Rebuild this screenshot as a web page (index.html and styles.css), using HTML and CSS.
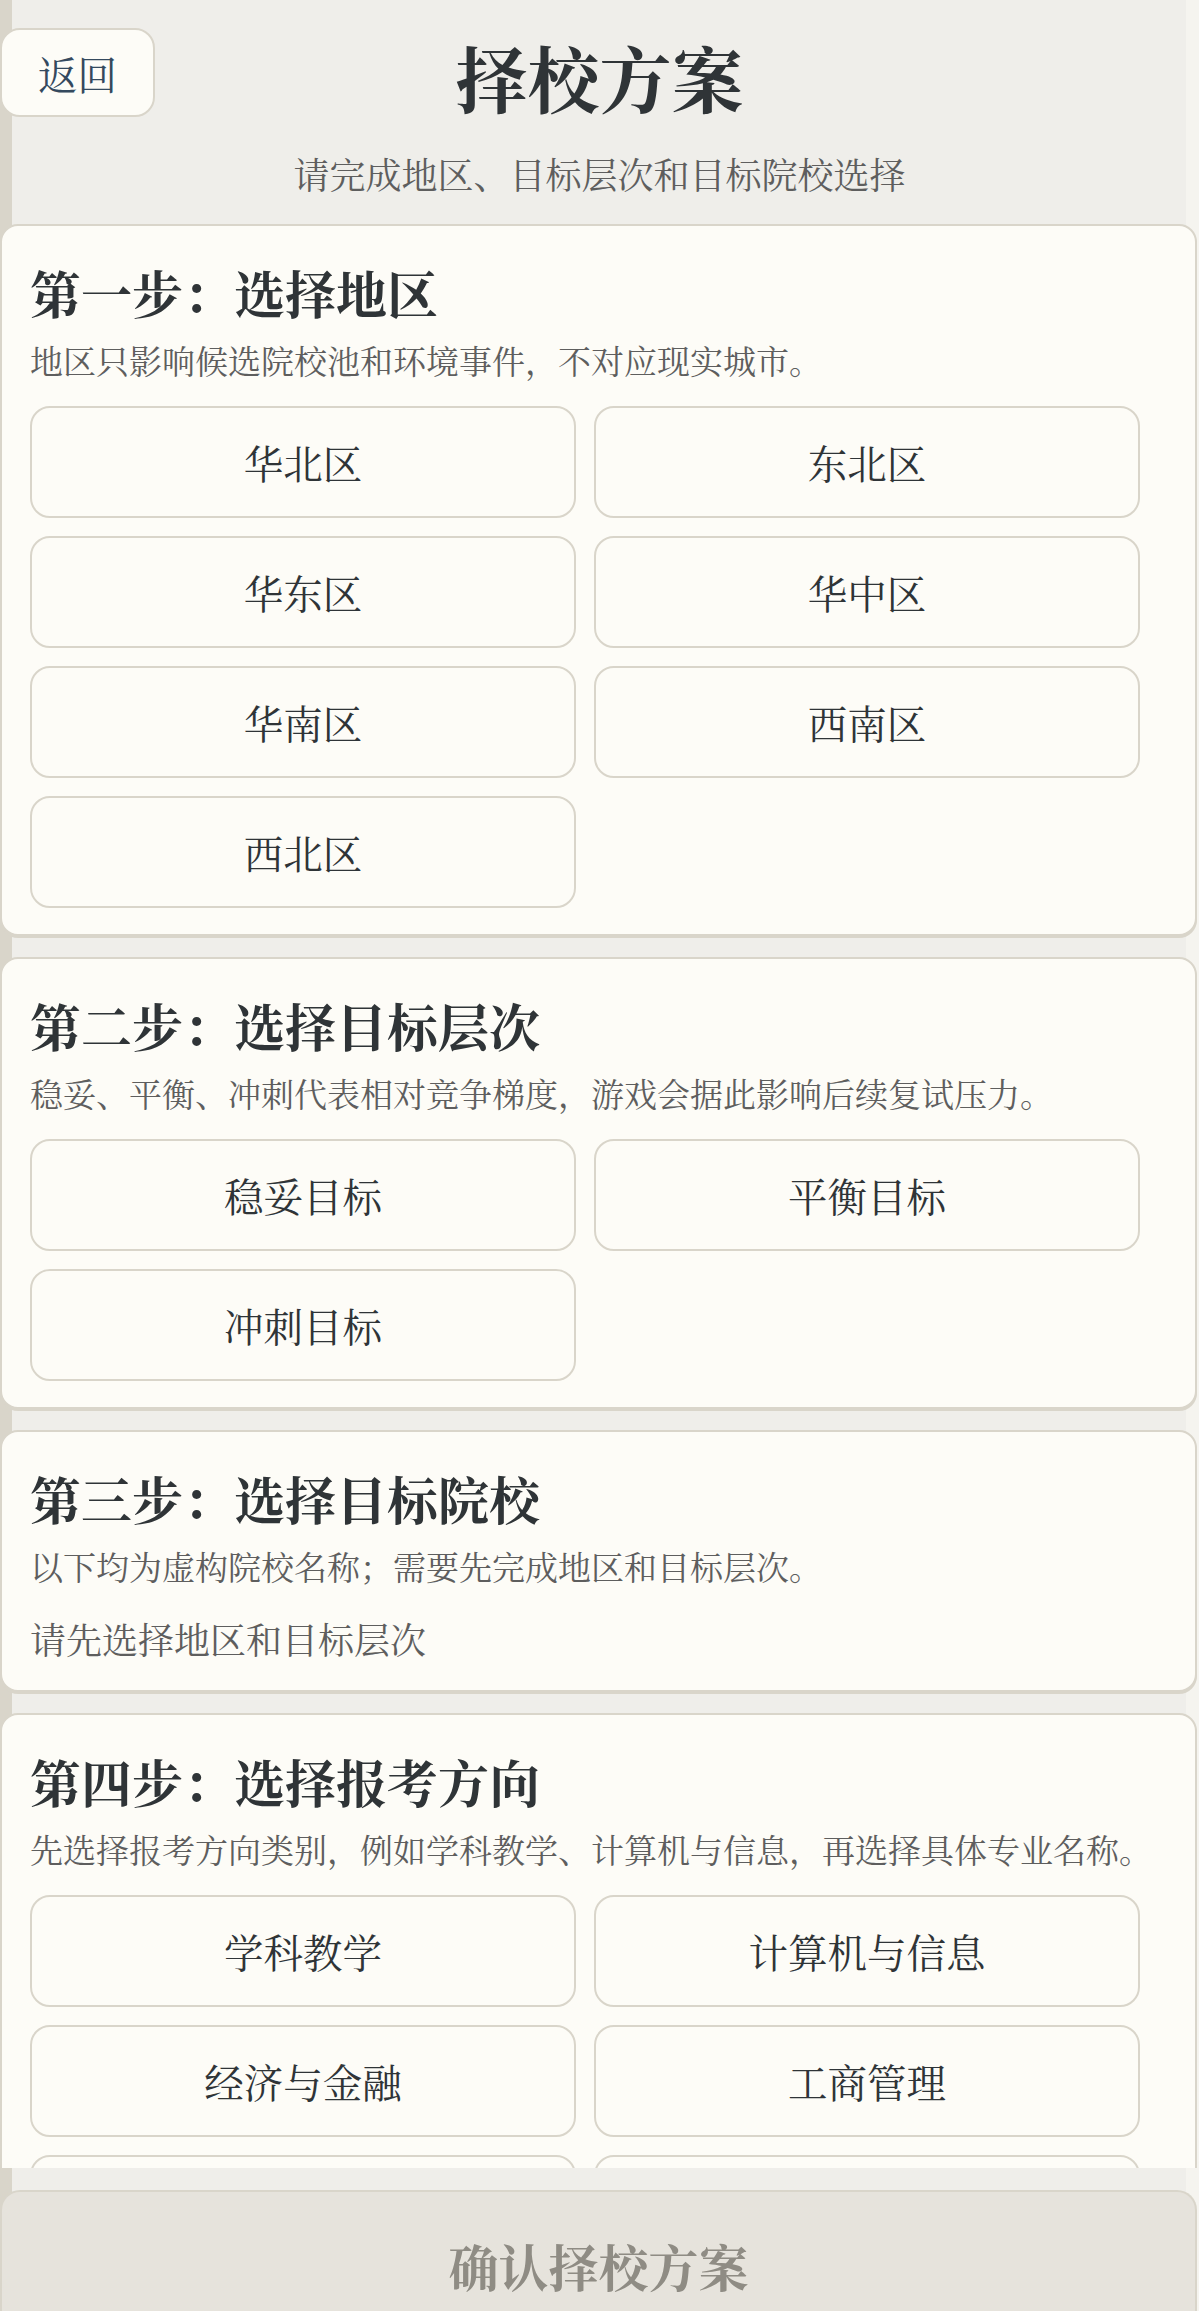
FILE: index.html
```html
<!DOCTYPE html>
<html lang="zh-CN">
<head>
  <meta charset="UTF-8">
  <title>择校方案</title>
  <link rel="stylesheet" href="styles.css">
</head>
<body>

  <div class="page">
    <header class="top">
      <div class="top-row">
        <button class="back-btn">返回</button>
        <h1 class="title">择校方案</h1>
      </div>
      <p class="subtitle">请完成地区、目标层次和目标院校选择</p>
    </header>

    <section class="card">
      <h2>第一步：选择地区</h2>
      <p class="hint">地区只影响候选院校池和环境事件，不对应现实城市。</p>
      <div class="options">
        <button class="option">华北区</button>
        <button class="option">东北区</button>
        <button class="option">华东区</button>
        <button class="option">华中区</button>
        <button class="option">华南区</button>
        <button class="option">西南区</button>
        <button class="option">西北区</button>
      </div>
    </section>

    <section class="card">
      <h2>第二步：选择目标层次</h2>
      <p class="hint">稳妥、平衡、冲刺代表相对竞争梯度，游戏会据此影响后续复试压力。</p>
      <div class="options">
        <button class="option">稳妥目标</button>
        <button class="option">平衡目标</button>
        <button class="option">冲刺目标</button>
      </div>
    </section>

    <section class="card">
      <h2>第三步：选择目标院校</h2>
      <p class="hint">以下均为虚构院校名称；需要先完成地区和目标层次。</p>
      <p class="empty">请先选择地区和目标层次</p>
    </section>

    <section class="card">
      <h2>第四步：选择报考方向</h2>
      <p class="hint">先选择报考方向类别，例如学科教学、计算机与信息，再选择具体专业名称。</p>
      <div class="options">
        <button class="option">学科教学</button>
        <button class="option">计算机与信息</button>
        <button class="option">经济与金融</button>
        <button class="option">工商管理</button>
        <button class="option">法学与社会</button>
        <button class="option">医学与健康</button>
      </div>
    </section>
  </div>

  <footer class="bottom-bar">
    <button class="confirm-btn" disabled>确认择校方案</button>
  </footer>

</body>
</html>
```

FILE: styles.css
```css
body {
  margin: 0;
  font-family: "Noto Serif CJK SC", "Noto Serif SC", "Source Han Serif SC", "Liberation Serif", "Noto Sans CJK SC", serif;
  color: #2f3437;
  background: linear-gradient(to right, #d9d5ca 0, #d9d5ca 12px, #efeeea 12px, #efeeea 1186px, #f5f4ef 1186px);
  min-height: 100vh;
}

.page {
  width: 1197px;
  padding-bottom: 200px;
}

.top {
  padding-top: 28px;
  height: 224px;
  box-sizing: border-box;
}

.top-row {
  display: grid;
  grid-template-columns: 1fr auto 1fr;
  align-items: start;
  width: 1199px;
}

.back-btn {
  justify-self: start;
  width: 155px;
  height: 89px;
  padding: 0;
  font-family: inherit;
  font-size: 39.5px;
  color: #34495e;
  background-color: #fdfcf7;
  border: 2px solid #d9d5ca;
  border-radius: 20px;
}

.title {
  margin: 0;
  font-size: 72px;
  line-height: 96px;
  font-weight: 700;
  color: #2f3437;
}

.subtitle {
  margin: 25px 0 0;
  width: 1199px;
  text-align: center;
  font-size: 36px;
  line-height: 50px;
  color: #5e5e5e;
}

.card {
  background-color: #fdfcf7;
  border: 2px solid #d9d5ca;
  border-radius: 18px;
  box-shadow: 0 2px 0 #d9d5ca;
  padding: 33px 20px 26px 28px;
  margin-bottom: 21px;
}

.card h2 {
  margin: 0;
  font-size: 51px;
  line-height: 67px;
  font-weight: 700;
}

.hint {
  margin: 10px 0 0;
  font-size: 33px;
  line-height: 48px;
  color: #5e5e5e;
}

.options {
  display: grid;
  grid-template-columns: 1fr 1fr;
  gap: 18px;
  width: 1110px;
  margin-top: 22px;
}

.option {
  height: 112px;
  padding: 0;
  font-family: inherit;
  font-size: 39.5px;
  color: #2f3437;
  background-color: #fdfcf7;
  border: 2px solid #d9d5ca;
  border-radius: 20px;
  cursor: pointer;
}

.empty {
  margin: 24px 0 0;
  font-size: 36px;
  line-height: 50px;
  color: #5e5e5e;
}

.bottom-bar {
  position: fixed;
  left: 0;
  bottom: 0;
  width: 1199px;
  height: 143px;
  padding-top: 22px;
  box-sizing: border-box;
  background: linear-gradient(to right, #d9d5ca 0, #d9d5ca 12px, #efeeea 12px, #efeeea 1186px, #f5f4ef 1186px);
}

.confirm-btn {
  display: block;
  width: 1197px;
  height: 121px;
  padding: 26px 0 0;
  box-sizing: border-box;
  font-family: inherit;
  font-size: 50px;
  line-height: 66px;
  font-weight: 700;
  color: #8f8c84;
  background-color: #e6e3dc;
  border: 2px solid #d9d5ca;
  border-bottom: none;
  border-radius: 20px 20px 0 0;
}
```
